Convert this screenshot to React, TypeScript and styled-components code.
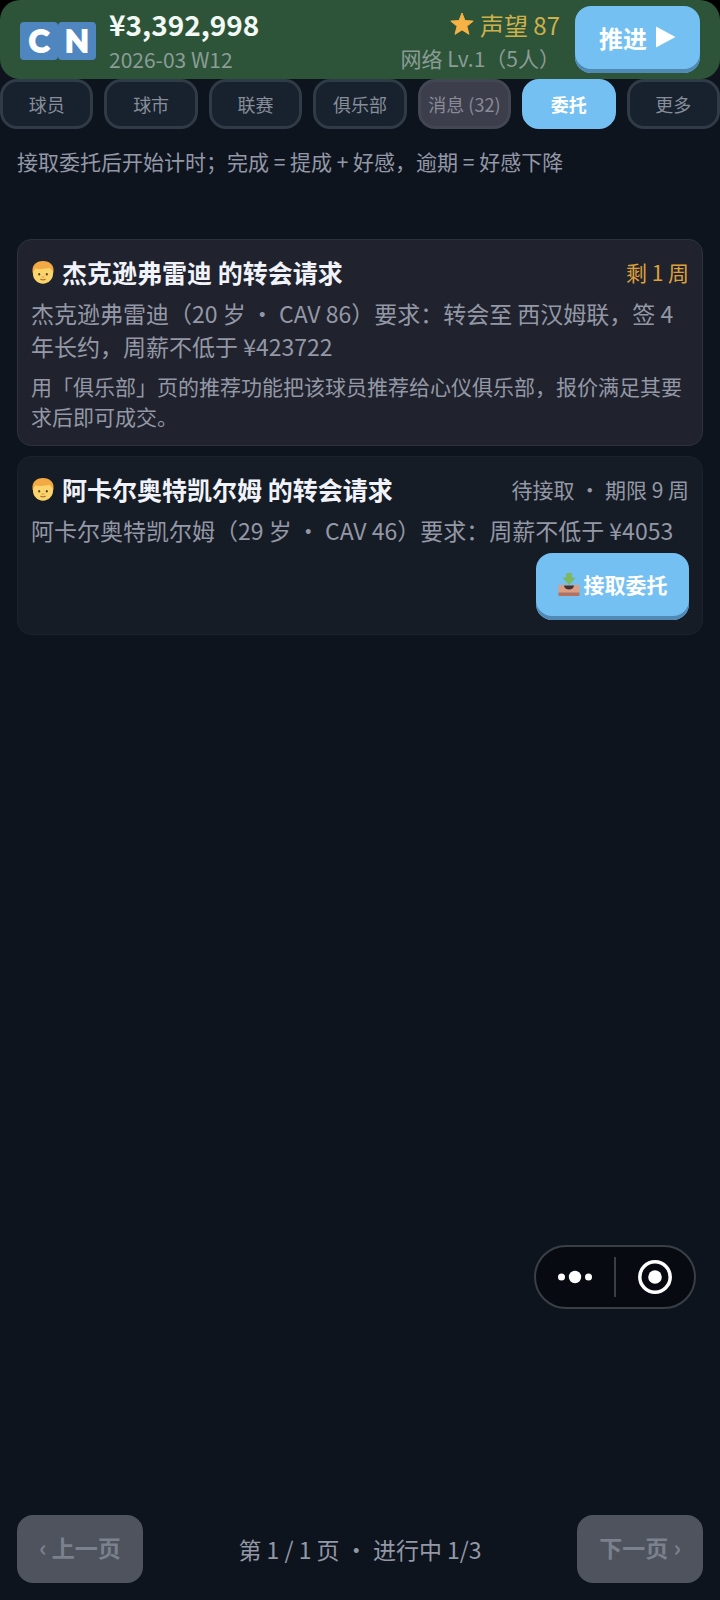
import React from "react";
import styled, { createGlobalStyle, css } from "styled-components";

const GlobalStyle = createGlobalStyle`
  *, *::before, *::after { box-sizing: border-box; }
  body {
    margin: 0;
    background: #0d141e;
    color: #9498a6;
    font-family: "Noto Sans CJK SC", sans-serif;
  }
  button { font-family: inherit; margin: 0; cursor: pointer; }
  h2, p { margin: 0; }
`;

const Page = styled.div`
  position: relative;
  display: flex;
  flex-direction: column;
  min-height: 100vh;
`;

const HeaderBackdrop = styled.div`
  background: linear-gradient(#000 50%, #0f131c 50%);
`;

const Header = styled.header`
  display: flex;
  align-items: center;
  height: 79px;
  padding: 0 20px;
  border-radius: 20px;
  background: #2d5438;
`;

const Flag = styled.div`
  display: flex;
  margin-right: 13px;
`;

const FlagLetter = styled.span`
  width: 38px;
  height: 38px;
  margin-top: 3px;
  border-radius: 4px;
  background: #4f86c0;
  color: #fff;
  font: 700 31px/37px Lato, sans-serif;
  text-align: center;
  -webkit-text-stroke: 2px #fff;
  stroke-linejoin: round;
`;

const HeaderColumn = styled.div<{ $end?: boolean }>`
  display: flex;
  flex-direction: column;
  padding-top: 3px;
  white-space: nowrap;
  ${(p) =>
    p.$end &&
    css`
      align-items: flex-end;
      margin-left: auto;
      margin-right: 15px;
    `}
`;

const Money = styled.strong`
  color: #f2f8f4;
  font-size: 28px;
  font-weight: 700;
  line-height: 35px;
`;

const SubLine = styled.span`
  color: #8b9c97;
  font-size: 21px;
  line-height: 34px;
`;

const Reputation = styled.span`
  display: flex;
  align-items: center;
  gap: 6px;
  color: #cdb14c;
  font-size: 24px;
  line-height: 33px;
`;

const PrimaryButton = styled.button<{ $wide?: boolean }>`
  display: flex;
  align-items: center;
  justify-content: center;
  gap: ${(p) => (p.$wide ? 4 : 8)}px;
  height: 67px;
  width: ${(p) => (p.$wide ? 153 : 125)}px;
  padding: 0 0 5px;
  border: 0;
  border-radius: 16px;
  background: #75c0f2;
  box-shadow: inset 0 -4px 0 #5189b5;
  color: #fff;
  font-size: ${(p) => (p.$wide ? 21 : 24)}px;
  font-weight: 700;
  white-space: nowrap;
`;

const Tabs = styled.nav`
  display: grid;
  grid-template-columns: repeat(7, minmax(0, 1fr));
  gap: 11px;
`;

type TabKind = "normal" | "alert" | "active";

const tabKinds = {
  normal: css`
    border-color: #303b48;
    background: #17222e;
    color: #878d99;
  `,
  alert: css`
    border-color: #434653;
    background: #3d3e4b;
    color: #888b97;
  `,
  active: css`
    border-color: #75c0f2;
    background: #75c0f2;
    color: #fff;
    font-weight: 700;
  `,
};

const Tab = styled.button<{ $kind: TabKind }>`
  height: 50px;
  padding: 0;
  border: 3px solid;
  border-radius: 17px;
  font-size: 18px;
  white-space: nowrap;
  ${(p) => tabKinds[p.$kind]}
`;

const Main = styled.main`
  display: flex;
  flex: 1;
  flex-direction: column;
  padding: 17px;
`;

const Notice = styled.p`
  margin-bottom: 63px;
  font-size: 21px;
  line-height: 30px;
`;

const CardList = styled.div`
  display: flex;
  flex-direction: column;
  gap: 10px;
`;

const Card = styled.article<{ $accepted?: boolean }>`
  display: flex;
  flex-direction: column;
  padding: 14px 13px;
  border: 1px solid ${(p) => (p.$accepted ? "#2b323d" : "#1b222c")};
  border-radius: 14px;
  background: ${(p) => (p.$accepted ? "#20232d" : "#161c25")};
`;

const CardHead = styled.div`
  display: flex;
  align-items: center;
  margin-bottom: 7px;
  line-height: 36px;
`;

const CardTitle = styled.h2`
  flex: 1;
  margin-left: 7px;
  color: #f1f3fa;
  font-size: 25px;
  font-weight: 700;
`;

const Status = styled.span<{ $urgent?: boolean }>`
  color: ${(p) => (p.$urgent ? "#dfa03c" : "#9498a6")};
  font-size: 21px;
`;

const Body = styled.p`
  font-size: 23px;
  line-height: 33px;
`;

const Hint = styled.p`
  margin-top: 8px;
  font-size: 21px;
  line-height: 30px;
`;

const Actions = styled.div`
  display: flex;
  justify-content: flex-end;
  margin-top: 6px;
`;

const Pager = styled.footer`
  display: flex;
  align-items: center;
  justify-content: space-between;
  margin-top: auto;
  font-size: 23px;
`;

const PageButton = styled.button`
  width: 126px;
  height: 68px;
  padding: 0 0 5px;
  border: 0;
  border-radius: 16px;
  background: #4e535e;
  color: #7b818d;
  font-size: 23px;
  font-weight: 700;
  white-space: nowrap;
`;

const Capsule = styled.div`
  position: absolute;
  right: 24px;
  bottom: 291px;
  display: flex;
  align-items: center;
  width: 162px;
  height: 64px;
  border: 2px solid #3a3f46;
  border-radius: 32px;
  background: #070b11;
`;

const CapsuleButton = styled.button`
  display: flex;
  flex: 1;
  align-items: center;
  justify-content: center;
  padding: 0;
  border: 0;
  background: none;
`;

const Divider = styled.span`
  width: 2px;
  height: 40px;
  background: #3a3f46;
`;

const Star = () => (
  <svg width="24" height="24" viewBox="0 0 24 24" aria-hidden="true">
    <path
      d="M12 1l3 7.6 8.2.5-6.3 5.2 2.1 8L12 17.900l-7 4.400 2.100-8L.8 9.100 9 8.600z"
      fill="#f6b244"
      stroke="#f6b244"
      strokeWidth="1"
      strokeLinejoin="round"
    />
  </svg>
);

const Play = () => (
  <svg width="21" height="24" viewBox="0 0 21 24" aria-hidden="true">
    <path d="M1 1.500L20.500 12 1 22.500z" fill="#fff" />
  </svg>
);

const Face = () => (
  <svg width="24" height="24" viewBox="0 0 24 24" aria-hidden="true">
    <path
      d="M1.500 12C.8 5 5 1 12 1s11.200 4 10.500 11c-.3 1.500-.6 2-1.500 2H3c-.9 0-1.200-.5-1.500-2z"
      fill="#f3a944"
    />
    <path
      d="M2 13c.2-2.500 1.700-3.200 2.800-4.800 1.300.7 3 .9 5 .8 3.300-.1 6-.7 8.700-1.200C20 9.500 21.800 10.500 22 13c.5 6-4.500 10.700-10 10.700S1.500 19 2 13z"
      fill="#fbd56c"
    />
    <ellipse cx="8.200" cy="14.200" rx="1" ry="1.200" fill="#5b4230" />
    <ellipse cx="15.800" cy="14.200" rx="1" ry="1.200" fill="#5b4230" />
    <path d="M11 17h2" stroke="#dc9a3d" strokeWidth="1" strokeLinecap="round" />
    <path d="M9.800 19.300c1.400.8 3 .8 4.400 0" stroke="#a5683a" strokeWidth="1.200" strokeLinecap="round" fill="none" />
  </svg>
);

const InboxTray = () => (
  <svg width="22" height="24" viewBox="0 0 22 24" aria-hidden="true">
    <path d="M.5 13h21v7.500H.5z" fill="#dd9d82" />
    <path d="M6 13.500h10c-.3 2.500-2.200 4-5 4s-4.700-1.500-5-4z" fill="#40343a" />
    <path d="M.5 20.500h21V23a1 1 0 0 1-1 1h-19a1 1 0 0 1-1-1z" fill="#b8705d" />
    <path d="M8.500 1.500h5v4.500H17l-6 6.500L5 6h3.500z" fill="#7db864" stroke="#7db864" strokeLinejoin="round" />
  </svg>
);

const tabs: { label: string; kind: TabKind }[] = [
  { label: "球员", kind: "normal" },
  { label: "球市", kind: "normal" },
  { label: "联赛", kind: "normal" },
  { label: "俱乐部", kind: "normal" },
  { label: "消息 (32)", kind: "alert" },
  { label: "委托", kind: "active" },
  { label: "更多", kind: "normal" },
];

export default function App() {
  return (
    <Page>
      <GlobalStyle />
      <HeaderBackdrop>
        <Header>
          <Flag>
            <FlagLetter>C</FlagLetter>
            <FlagLetter>N</FlagLetter>
          </Flag>
          <HeaderColumn>
            <Money>¥3,392,998</Money>
            <SubLine>2026-03 W12</SubLine>
          </HeaderColumn>
          <HeaderColumn $end>
            <Reputation>
              <Star />
              声望 87
            </Reputation>
            <SubLine>网络 Lv.1（5人）</SubLine>
          </HeaderColumn>
          <PrimaryButton type="button">
            推进 <Play />
          </PrimaryButton>
        </Header>
      </HeaderBackdrop>
      <Tabs>
        {tabs.map((tab) => (
          <Tab
            key={tab.label}
            type="button"
            $kind={tab.kind}
            aria-current={tab.kind === "active" ? "page" : undefined}
          >
            {tab.label}
          </Tab>
        ))}
      </Tabs>
      <Main>
        <Notice>接取委托后开始计时；完成 = 提成 + 好感，逾期 = 好感下降</Notice>
        <CardList>
          <Card $accepted>
            <CardHead>
              <Face />
              <CardTitle>杰克逊弗雷迪 的转会请求</CardTitle>
              <Status $urgent>剩 1 周</Status>
            </CardHead>
            <Body>杰克逊弗雷迪（20 岁 · CAV 86）要求：转会至 西汉姆联，签 4 年长约，周薪不低于 ¥423722</Body>
            <Hint>用「俱乐部」页的推荐功能把该球员推荐给心仪俱乐部，报价满足其要求后即可成交。</Hint>
          </Card>
          <Card>
            <CardHead>
              <Face />
              <CardTitle>阿卡尔奥特凯尔姆 的转会请求</CardTitle>
              <Status>待接取 · 期限 9 周</Status>
            </CardHead>
            <Body>阿卡尔奥特凯尔姆（29 岁 · CAV 46）要求：周薪不低于 ¥4053</Body>
            <Actions>
              <PrimaryButton type="button" $wide>
                <InboxTray />
                接取委托
              </PrimaryButton>
            </Actions>
          </Card>
        </CardList>
        <Pager>
          <PageButton type="button" disabled>
            ‹ 上一页
          </PageButton>
          <span>第 1 / 1 页 · 进行中 1/3</span>
          <PageButton type="button" disabled>
            下一页 ›
          </PageButton>
        </Pager>
      </Main>
      <Capsule>
        <CapsuleButton type="button" aria-label="更多操作">
          <svg width="34" height="14" viewBox="0 0 34 14" fill="#fff">
            <circle cx="3.500" cy="7" r="3.500" />
            <circle cx="17" cy="7" r="6.200" />
            <circle cx="30.500" cy="7" r="3.500" />
          </svg>
        </CapsuleButton>
        <Divider />
        <CapsuleButton type="button" aria-label="关闭">
          <svg width="34" height="34" viewBox="0 0 34 34">
            <circle cx="17" cy="17" r="15.200" fill="none" stroke="#fff" strokeWidth="3.500" />
            <circle cx="17" cy="17" r="6.800" fill="#fff" />
          </svg>
        </CapsuleButton>
      </Capsule>
    </Page>
  );
}
